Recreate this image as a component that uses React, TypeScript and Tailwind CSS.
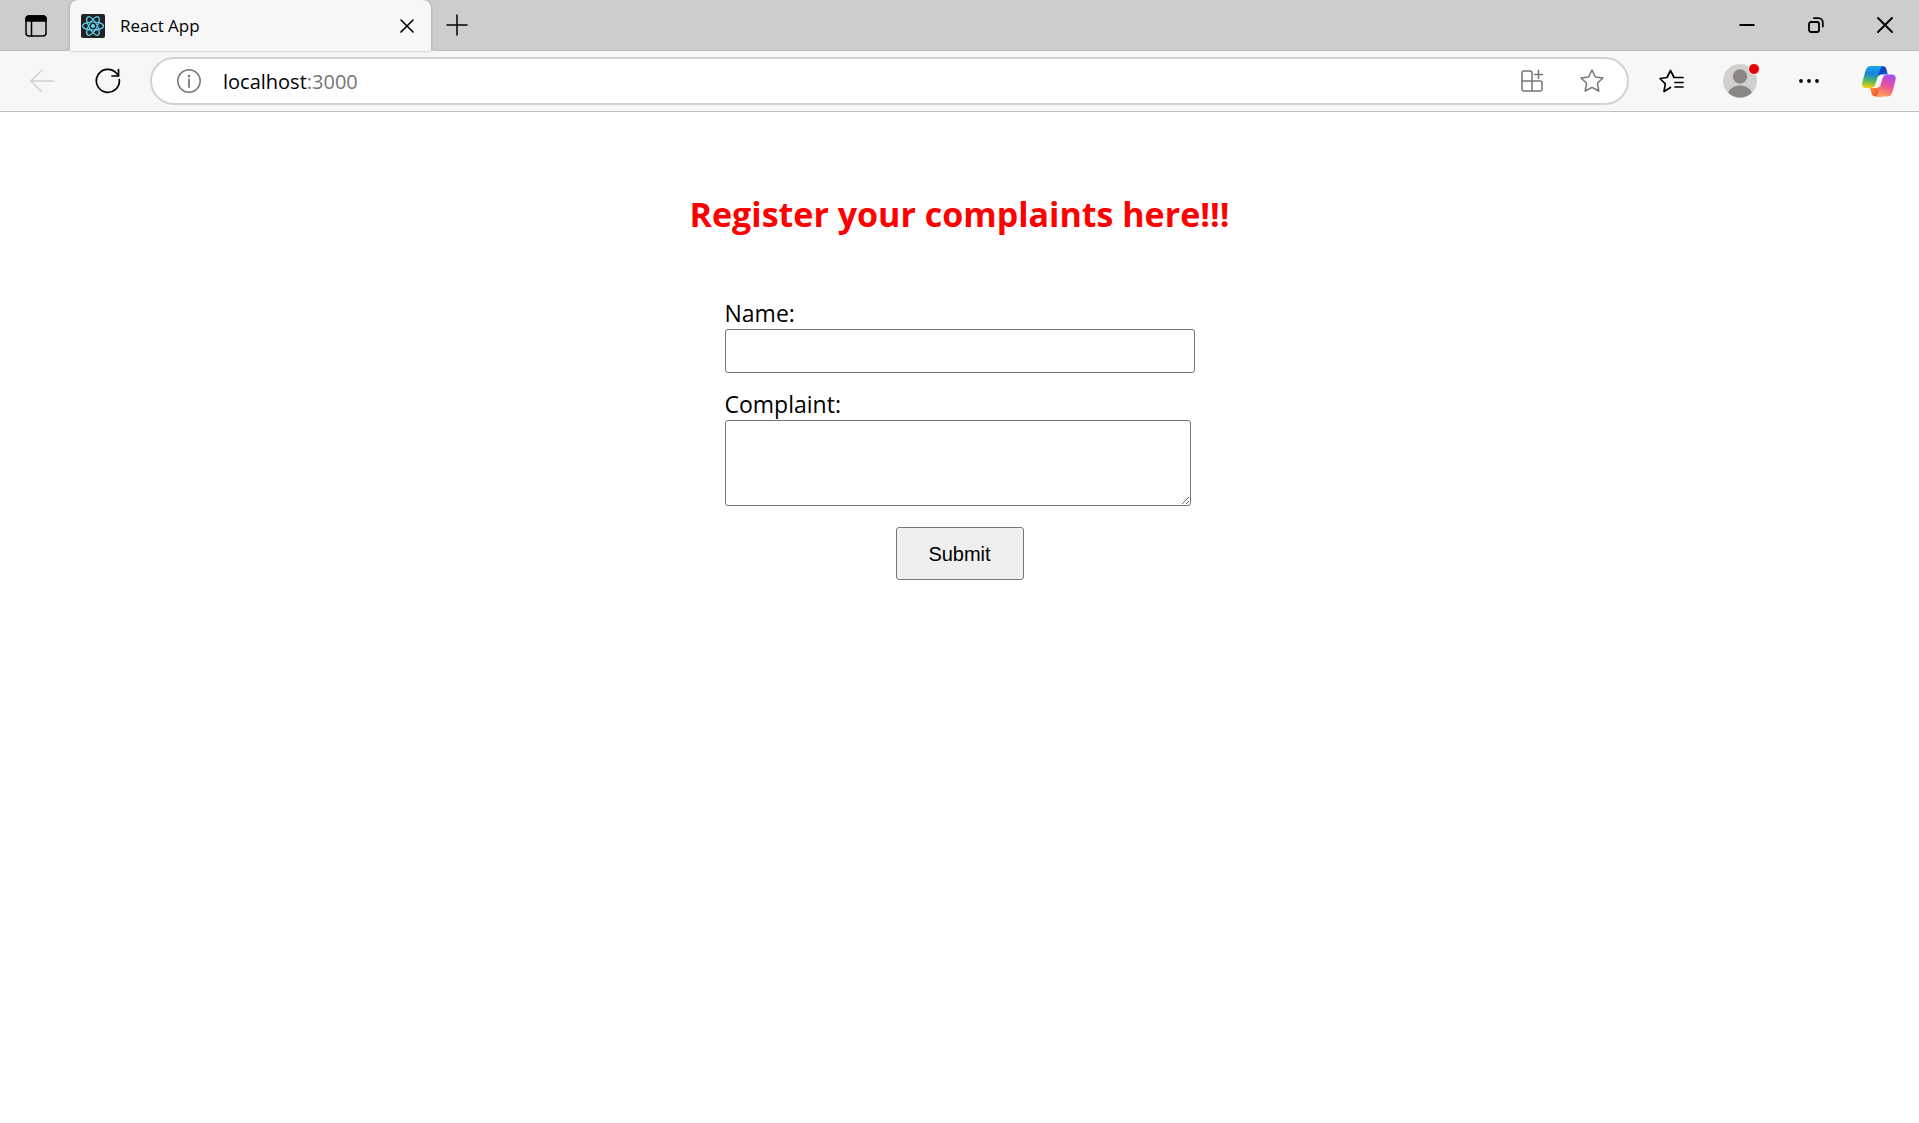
import React from "react";

const stroke = {
  fill: "none",
  stroke: "currentColor",
  strokeLinecap: "round" as const,
  strokeLinejoin: "round" as const,
};

function TabActionsIcon() {
  return (
    <svg width="22" height="22" viewBox="0 0 22 22" {...stroke} strokeWidth="1.5">
      <rect x="1" y="1" width="20" height="20" rx="3" />
      <path d="M1 6V4a3 3 0 0 1 3-3h14a3 3 0 0 1 3 3v2z" fill="currentColor" />
      <path d="M6.5 6v15" />
    </svg>
  );
}

function ReactLogo() {
  return (
    <svg width="24" height="24" viewBox="0 0 24 24">
      <rect width="24" height="24" rx="2" fill="#222222" />
      <g fill="none" stroke="#61dafb" strokeWidth="1.2">
        <ellipse cx="12" cy="12" rx="10.5" ry="4" />
        <ellipse cx="12" cy="12" rx="10.5" ry="4" transform="rotate(60 12 12)" />
        <ellipse cx="12" cy="12" rx="10.5" ry="4" transform="rotate(120 12 12)" />
      </g>
      <circle cx="12" cy="12" r="2" fill="#61dafb" />
    </svg>
  );
}

function CopilotLogo() {
  return (
    <svg width="34" height="31" viewBox="0 0 34 31">
      <defs>
        <linearGradient id="cpLeft" x1="0.5" y1="0" x2="0.4" y2="1">
          <stop offset="0" stopColor="#1ba8f0" />
          <stop offset="0.35" stopColor="#1583dc" />
          <stop offset="0.65" stopColor="#4cb36a" />
          <stop offset="1" stopColor="#f5cf08" />
        </linearGradient>
        <linearGradient id="cpTop" x1="0" y1="0" x2="1" y2="1">
          <stop offset="0" stopColor="#1c7cf0" />
          <stop offset="0.5" stopColor="#0a3fc0" />
          <stop offset="1" stopColor="#2b7df0" />
        </linearGradient>
        <linearGradient id="cpRight" x1="0.7" y1="0" x2="0.4" y2="1">
          <stop offset="0" stopColor="#a34ff0" />
          <stop offset="0.5" stopColor="#ea4f9c" />
          <stop offset="1" stopColor="#ffa24f" />
        </linearGradient>
        <linearGradient id="cpBottom" x1="0" y1="0" x2="1" y2="1">
          <stop offset="0" stopColor="#ffa02e" />
          <stop offset="1" stopColor="#e8353c" />
        </linearGradient>
      </defs>
      <path d="M14 0h6c3 0 4 1.500 4.700 4l1.200 4.500h-6c-1.500 0-2.500 0.500-3.500 2z" fill="url(#cpTop)" />
      <path d="M20 30.500h-6c-3 0-4-1.500-4.700-4L8 22h6c1.500 0 2.500-0.500 3.500-2z" fill="url(#cpBottom)" />
      <path d="M9 0h12.500c-2 0-3 1.500-3.700 4l-4.300 14c-.8 2.800-2.500 4-5.300 4H4c-3.500 0-4.500-2.500-3.600-6L3.600 4.500C4.500 1.500 6 0 9 0z" fill="url(#cpLeft)" />
      <path d="M25 30.500H12.500c2 0 3-1.500 3.700-4l4.300-14c.8-2.800 2.500-4 5.300-4h4c3.500 0 4.500 2.500 3.600 6L30.400 26c-.9 3-2.400 4.500-5.400 4.500z" fill="url(#cpRight)" />
    </svg>
  );
}

function TitleBar() {
  return (
    <header className="flex h-[51px] items-stretch bg-[#cdcdcd]">
      <button aria-label="Tab actions" className="flex w-[70px] items-center justify-center rounded-br-md border-b border-[#bdbdbd] pt-0.5 pl-0.5">
        <TabActionsIcon />
      </button>
      <div className="flex w-[361px] items-center rounded-t-lg bg-[#f7f7f7] pt-px pr-4 pl-[11px] shadow-[0_0_3px_rgba(0,0,0,0.25)]">
        <ReactLogo />
        <span className="ml-[15px] flex-1 text-[17px]">React App</span>
        <button aria-label="Close tab" className="flex size-4 items-center justify-center">
          <svg width="14" height="14" viewBox="0 0 14 14" {...stroke} strokeWidth="1.600">
            <path d="M1 1l12 12M13 1L1 13" />
          </svg>
        </button>
      </div>
      <div className="flex flex-1 justify-between rounded-bl-md border-b border-[#bdbdbd]">
        <button aria-label="New tab" className="flex w-[51px] items-center justify-center">
          <svg width="22" height="22" viewBox="0 0 22 22" {...stroke} strokeWidth="1.500">
            <path d="M11 1v20M1 11h20" />
          </svg>
        </button>
        <div className="flex">
          <button aria-label="Minimize" className="flex w-[69px] items-center justify-center">
            <svg width="16" height="16" viewBox="0 0 16 16" stroke="currentColor" strokeWidth="2">
              <path d="M0.500 8h15" />
            </svg>
          </button>
          <button aria-label="Restore" className="flex w-[69px] items-center justify-center">
            <svg width="16" height="16" viewBox="0 0 16 16" {...stroke} strokeWidth="1.800">
              <rect x="1" y="5" width="10" height="10" rx="2" />
              <path d="M6 1.200h4.500a4.300 4.300 0 0 1 4.300 4.300V9.500" />
            </svg>
          </button>
          <button aria-label="Close" className="flex w-[69px] items-center justify-center">
            <svg width="16" height="16" viewBox="0 0 16 16" {...stroke} strokeWidth="1.900">
              <path d="M1 1l14 14M15 1L1 15" />
            </svg>
          </button>
        </div>
      </div>
    </header>
  );
}

function Toolbar() {
  return (
    <nav className="flex h-[61px] items-center border-b border-[#bfbfbf] bg-[#f7f7f7] pr-1 pl-2">
      <button aria-label="Back" className="flex w-[68px] justify-center text-[#cfcfcf]">
        <svg width="24" height="24" viewBox="0 0 24 24" {...stroke} strokeWidth="1.500">
          <path d="M23.500 12H0.800M11.500 1.500L0.800 12l10.700 10.500" />
        </svg>
      </button>
      <button aria-label="Refresh" className="flex w-[64px] justify-center">
        <svg width="26" height="26" viewBox="0 0 26 26" {...stroke} strokeWidth="1.700">
          <path d="M24.300 11.500A11.500 11.500 0 1 1 21.500 5.200L23.500 7.500" />
          <path d="M23.500 1.500v6.500h-6.500" />
        </svg>
      </button>
      <div className="ml-[10px] flex h-12 flex-1 items-center rounded-full border-2 border-[#d2d2d2] bg-white pr-[23px] pl-[25px] text-[#767676]">
        <button aria-label="Site information" className="mr-[22px]">
          <svg width="24" height="24" viewBox="0 0 24 24" {...stroke} strokeWidth="1.500">
            <circle cx="12" cy="12" r="11.200" />
            <path d="M12 10.500v7.500" strokeWidth="1.800" />
            <circle cx="12" cy="7" r="0.600" fill="currentColor" />
          </svg>
        </button>
        <div className="flex-1 pt-0.5 text-[20px]">
          <span className="text-black">localhost</span>:3000
        </div>
        <div className="flex items-center gap-9">
          <button aria-label="Apps">
            <svg width="24" height="24" viewBox="0 0 24 24" {...stroke} strokeWidth="1.500">
              <path d="M12 12V4a2 2 0 0 0-2-2H4a2 2 0 0 0-2 2v16a2 2 0 0 0 2 2h16a2 2 0 0 0 2-2v-6a2 2 0 0 0-2-2H2M12 12v10M18.500 1.500v8M14.500 5.500h8" />
            </svg>
          </button>
          <button aria-label="Add to favorites">
            <svg width="24" height="24" viewBox="0 0 24 24" {...stroke} strokeWidth="1.500">
              <path d="M12 1l3.300 7 7.700 1-5.600 5.300 1.400 7.700-6.800-3.700L5.200 22l1.400-7.700L1 9l7.700-1z" />
            </svg>
          </button>
        </div>
      </div>
      <div className="ml-[7px] flex items-center">
        <button aria-label="Favorites" className="flex w-[69px] justify-center">
          <svg width="26" height="24" viewBox="0 0 26 24" {...stroke} strokeWidth="1.700">
            <path d="M12.500 18.500L6 22.500l1.300-7.700L2 9.500 9 8.500l3.500-7 3.300 6.500M16 8.500h9M17 13.500h8M17 18h8" />
          </svg>
        </button>
        <button aria-label="Profile" className="flex w-[69px] justify-center">
          <span className="relative">
            <svg width="34" height="34" viewBox="0 0 34 34">
              <defs>
                <clipPath id="avatar"><circle cx="17" cy="17" r="16.500" /></clipPath>
              </defs>
              <circle cx="17" cy="17" r="17" fill="#d2d0ce" />
              <g clipPath="url(#avatar)" fill="#8a8683">
                <circle cx="17" cy="12.500" r="7.200" />
                <ellipse cx="17" cy="32" rx="12.500" ry="10.500" />
              </g>
            </svg>
            <span className="absolute -top-px -right-[3px] size-3 rounded-full border border-[#f7f7f7] bg-[#e60000]" />
          </span>
        </button>
        <button aria-label="Settings and more" className="flex w-[69px] justify-center">
          <svg width="20" height="4" viewBox="0 0 20 4" fill="currentColor">
            <circle cx="2" cy="2" r="1.900" />
            <circle cx="10" cy="2" r="1.900" />
            <circle cx="18" cy="2" r="1.900" />
          </svg>
        </button>
        <button aria-label="Copilot" className="flex w-[72px] justify-center">
          <CopilotLogo />
        </button>
      </div>
    </nav>
  );
}

function ComplaintForm() {
  return (
    <main className="flex flex-col items-center pt-[77px]">
      <h1 className="text-[34px] leading-[50px] font-bold text-[#ff0000]">Register your complaints here!!!</h1>
      <form className="mt-[57px] flex w-[470px] flex-col" onSubmit={(e) => e.preventDefault()}>
        <label htmlFor="name" className="pt-px text-[23px] leading-8">Name:</label>
        <input id="name" type="text" className="h-11 rounded-[3px] border border-[#767676] px-2 text-[20px]" />
        <label htmlFor="complaint" className="mt-[14px] pt-px text-[23px] leading-8">Complaint:</label>
        <textarea id="complaint" className="mr-1 h-[86px] resize rounded-[3px] border border-[#767676] px-2 text-[20px]" />
        <button
          type="submit"
          className="mt-[21px] h-[53px] w-32 self-center rounded-[3px] border border-[#767676] bg-[#efefef] font-['Liberation_Sans',Arial,sans-serif] text-[20px]"
        >
          Submit
        </button>
      </form>
    </main>
  );
}

export default function App() {
  return (
    <div className="min-h-screen bg-white font-['Open_Sans','Noto_Sans',sans-serif] text-black">
      <TitleBar />
      <Toolbar />
      <ComplaintForm />
    </div>
  );
}
